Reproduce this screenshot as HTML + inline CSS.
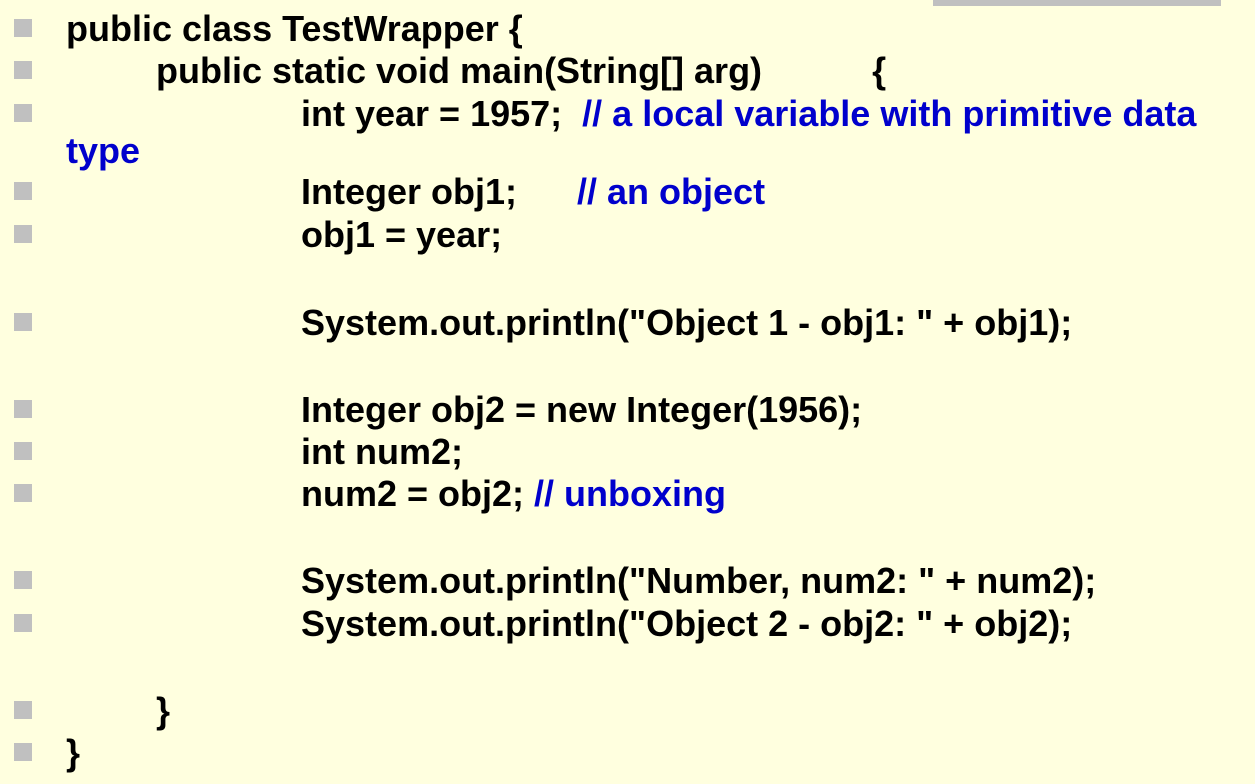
<!DOCTYPE html>
<html><head><meta charset="utf-8"><style>
html,body{margin:0;padding:0;}
body{width:1255px;height:784px;background:#FFFFDF;position:relative;overflow:hidden;font-family:"Liberation Sans",Arial,sans-serif;font-weight:bold;font-size:36px;color:#000;}
.l{position:absolute;height:42px;line-height:42px;white-space:pre;}
.b{position:absolute;left:14px;width:18px;height:18px;background:#C0C0C0;}
.c{color:#0000CC;}
.bar{position:absolute;left:933px;top:0;width:288px;height:6px;background:#C0C0C0;}
</style></head><body>
<div class="bar"></div>

<div class="b" style="top:19px"></div><div class="l" style="top:8px;left:66px">public class TestWrapper {</div>
<div class="b" style="top:61px"></div><div class="l" style="top:50px;left:156px">public static void main(String[] arg)           {</div>
<div class="b" style="top:104px"></div><div class="l" style="top:93px;left:301px">int year = 1957;  <span class="c">// a local variable with primitive data</span></div>
<div class="l c" style="top:130px;left:66px">type</div>
<div class="b" style="top:182px"></div><div class="l" style="top:171px;left:301px">Integer obj1;      <span class="c">// an object</span></div>
<div class="b" style="top:225px"></div><div class="l" style="top:214px;left:301px">obj1 = year;</div>
<div class="b" style="top:313px"></div><div class="l" style="top:302px;left:301px">System.out.println("Object 1 - obj1: " + obj1);</div>
<div class="b" style="top:400px"></div><div class="l" style="top:389px;left:301px">Integer obj2 = new Integer(1956);</div>
<div class="b" style="top:442px"></div><div class="l" style="top:431px;left:301px">int num2;</div>
<div class="b" style="top:484px"></div><div class="l" style="top:473px;left:301px">num2 = obj2; <span class="c">// unboxing</span></div>
<div class="b" style="top:571px"></div><div class="l" style="top:560px;left:301px">System.out.println("Number, num2: " + num2);</div>
<div class="b" style="top:614px"></div><div class="l" style="top:603px;left:301px">System.out.println("Object 2 - obj2: " + obj2);</div>
<div class="b" style="top:701px"></div><div class="l" style="top:690px;left:156px">}</div>
<div class="b" style="top:743px"></div><div class="l" style="top:732px;left:66px">}</div>
</body></html>
